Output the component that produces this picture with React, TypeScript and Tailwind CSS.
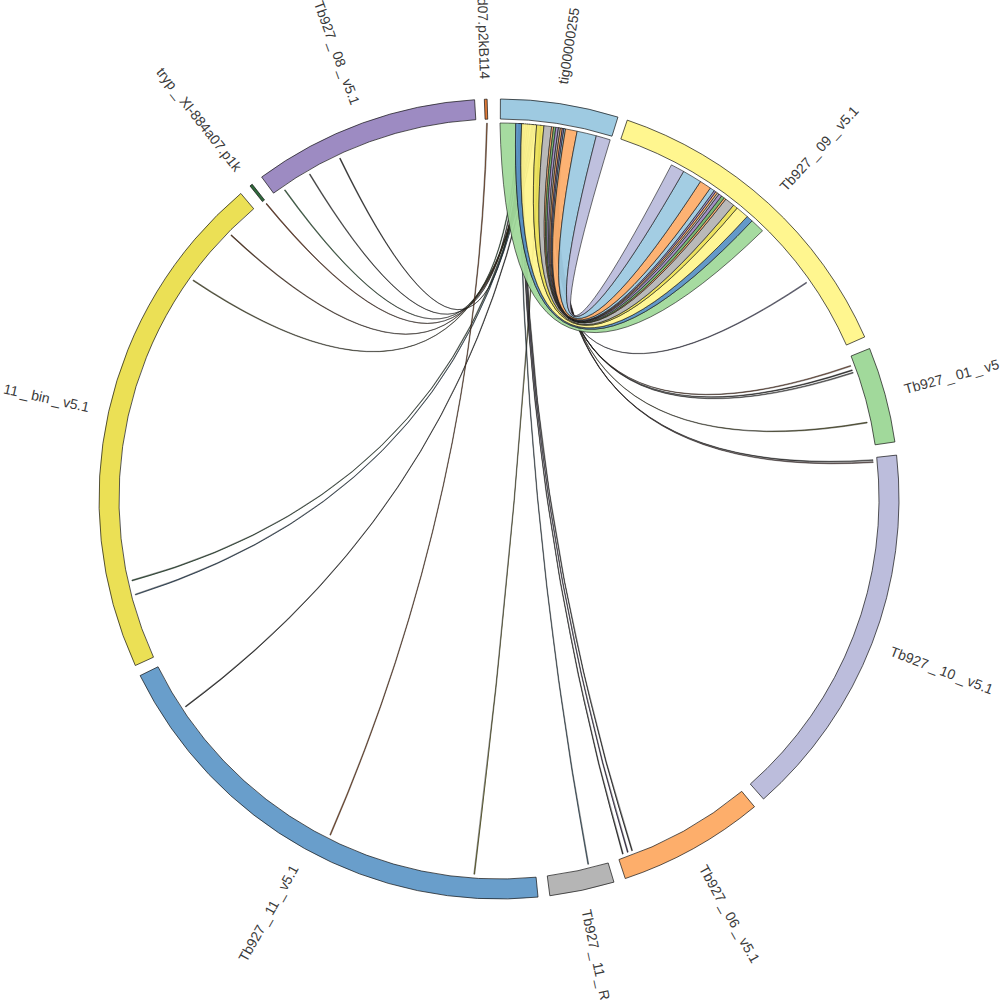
import React from "react";

// circle geometry
const CX = 499;
const CY = 499;
const R_OUT = 400;
const R_IN = 380;
const R_LINK = 376;
const R_LABEL = 420;

const rad = (d: number) => (d * Math.PI) / 180;
const pt = (deg: number, r: number): [number, number] => [CX + r * Math.sin(rad(deg)), CY - r * Math.cos(rad(deg))];
const f = (p: [number, number]) => `${p[0].toFixed(2)} ${p[1].toFixed(2)}`;

type Segment = { name: string; start: number; end: number; fill: string };

const segments: Segment[] = [
  { name: "tig00000255", start: 0.2, end: 17.3, fill: "#9ecae1" },
  { name: "Tb927_09_v5.1", start: 18.7, end: 66.1, fill: "#fff68f" },
  { name: "Tb927_01_v5.1", start: 67.9, end: 81.8, fill: "#a1d99b" },
  { name: "Tb927_10_v5.1", start: 83.7, end: 138.6, fill: "#bcbddc" },
  { name: "Tb927_06_v5.1", start: 140.3, end: 161.6, fill: "#fdae6b" },
  { name: "Tb927_11_RNA_v5.1", start: 163.3, end: 172.7, fill: "#b5b5b5" },
  { name: "Tb927_11_v5.1", start: 174.4, end: 243.8, fill: "#699ecb" },
  { name: "Tb927_11_bin_v5.1", start: 245.4, end: 319.8, fill: "#ebe055" },
  { name: "tryp_Xl-884a07.p1k", start: 321.5, end: 321.9, fill: "#2f6b3c" },
  { name: "Tb927_08_v5.1", start: 323.6, end: 356.5, fill: "#9d8bc2" },
  { name: "d07.p2kB114", start: 357.9, end: 358.3, fill: "#e07b39" },
];

// ribbons: [a1, a2, b1, b2, fill]
const ribbons: [number, number, number, number, string][] = [
  [0.15, 2.55, 42.3, 44.5, "#a1d99b"],
  [2.55, 3.45, 41.3, 42.3, "#5b93c6"],
  [3.45, 5.75, 39.3, 41.3, "#fff68f"],
  [5.75, 6.87, 38.6, 39.3, "#ebe055"],
  [6.87, 8.05, 37.1, 38.6, "#b5b5b5"],
  [8.05, 8.35, 36.8, 37.1, "#fdae6b"],
  [8.35, 8.7, 36.3, 36.8, "#74b36b"],
  [8.7, 9.1, 35.8, 36.3, "#9d8bc2"],
  [9.1, 9.4, 35.5, 35.8, "#b5b5b5"],
  [9.4, 9.7, 35.2, 35.5, "#fdae6b"],
  [9.7, 9.95, 34.9, 35.2, "#9d8bc2"],
  [9.95, 10.2, 34.2, 34.9, "#9ecae1"],
  [10.2, 12.0, 32.4, 34.2, "#fdae6b"],
  [12.0, 15.0, 29.4, 32.4, "#9ecae1"],
  [15.0, 17.2, 27.3, 29.4, "#bcbddc"],
];

// thin links: [source, target, colour]
const lines: [number, number, string][] = [
  [3.0, 325.2, "#3f7d4c"],
  [3.3, 329.7, "#444444"],
  [3.6, 334.9, "#444444"],
  [321.7, 4.0, "#8b4a2b"],
  [4.3, 314.5, "#6b3a1a"],
  [4.6, 305.5, "#6b6b3a"],
  [5.0, 257.4, "#3d6b4a"],
  [5.2, 255.2, "#3a5f80"],
  [5.5, 236.4, "#333333"],
  [358.1, 206.6, "#b0612f"],
  [6.3, 183.7, "#8a8a35"],
  [3.0, 166.2, "#4d7288"],
  [3.2, 160.7, "#333333"],
  [3.4, 159.9, "#4a3a64"],
  [3.6, 159.2, "#333333"],
  [9.0, 54.8, "#7a7aa0"],
  [9.2, 69.2, "#a06040"],
  [9.4, 69.9, "#444444"],
  [9.5, 70.3, "#666666"],
  [9.6, 78.2, "#777740"],
  [9.8, 84.0, "#555555"],
  [10.0, 84.3, "#806060"],
];

function control(a: number, b: number): [number, number] {
  let d = b - a;
  while (d > 180) d -= 360;
  while (d < -180) d += 360;
  return pt(a + d / 2, 22);
}

function segmentPath(s: Segment) {
  const large = s.end - s.start > 180 ? 1 : 0;
  return [
    `M ${f(pt(s.start, R_OUT))}`,
    `A ${R_OUT} ${R_OUT} 0 ${large} 1 ${f(pt(s.end, R_OUT))}`,
    `L ${f(pt(s.end, R_IN))}`,
    `A ${R_IN} ${R_IN} 0 ${large} 0 ${f(pt(s.start, R_IN))}`,
    "Z",
  ].join(" ");
}

function ribbonPath(a1: number, a2: number, b1: number, b2: number) {
  const c = control((a1 + a2) / 2, (b1 + b2) / 2);
  return [
    `M ${f(pt(a1, R_LINK))}`,
    `A ${R_LINK} ${R_LINK} 0 0 1 ${f(pt(a2, R_LINK))}`,
    `Q ${f(c)} ${f(pt(b1, R_LINK))}`,
    `A ${R_LINK} ${R_LINK} 0 0 1 ${f(pt(b2, R_LINK))}`,
    `Q ${f(c)} ${f(pt(a1, R_LINK))}`,
    "Z",
  ].join(" ");
}

function Name({ name }: { name: string }) {
  const parts = name.split("_");
  return (
    <>
      {parts.map((p, i) =>
        i === 0 ? (
          <tspan key={i}>{p}</tspan>
        ) : (
          <React.Fragment key={i}>
            <tspan dx={3}>_</tspan>
            <tspan dx={3}>{p}</tspan>
          </React.Fragment>
        ),
      )}
    </>
  );
}

function Label({ s }: { s: Segment }) {
  const mid = (s.start + s.end) / 2;
  const [x, y] = pt(mid, R_LABEL);
  const right = mid < 180;
  return (
    <text
      x={x}
      y={y}
      fill="#3a3a3a"
      textAnchor={right ? "start" : "end"}
      dominantBaseline="central"
      transform={`rotate(${right ? mid - 90 : mid - 270} ${x} ${y})`}
    >
      <Name name={s.name} />
    </text>
  );
}

export default function App() {
  return (
    <div className="w-[1000px] h-[1000px] overflow-hidden bg-white">
      <svg width={1000} height={1000} viewBox="0 0 1000 1000" className="block [font-family:'Liberation_Sans',Arial,sans-serif] text-[14px]">
        {/* links */}
        <g stroke="#111" strokeWidth={0.45} strokeLinejoin="round">
          {lines.map(([s, t, c], i) => (
            <path key={`l${i}`} d={ribbonPath(s, s + 0.14, t, t + 0.14)} fill={c} />
          ))}
          {ribbons.map(([a1, a2, b1, b2, c], i) => (
            <path key={`r${i}`} d={ribbonPath(a1, a2, b1, b2)} fill={c} fillOpacity={0.95} strokeWidth={0.6} />
          ))}
        </g>

        {/* ideograms */}
        <g stroke="#111" strokeWidth={0.7}>
          {segments.map((s) => (
            <path key={s.name} d={segmentPath(s)} fill={s.fill} />
          ))}
        </g>

        {/* labels */}
        {segments.map((s) => (
          <Label key={s.name} s={s} />
        ))}
      </svg>
    </div>
  );
}
